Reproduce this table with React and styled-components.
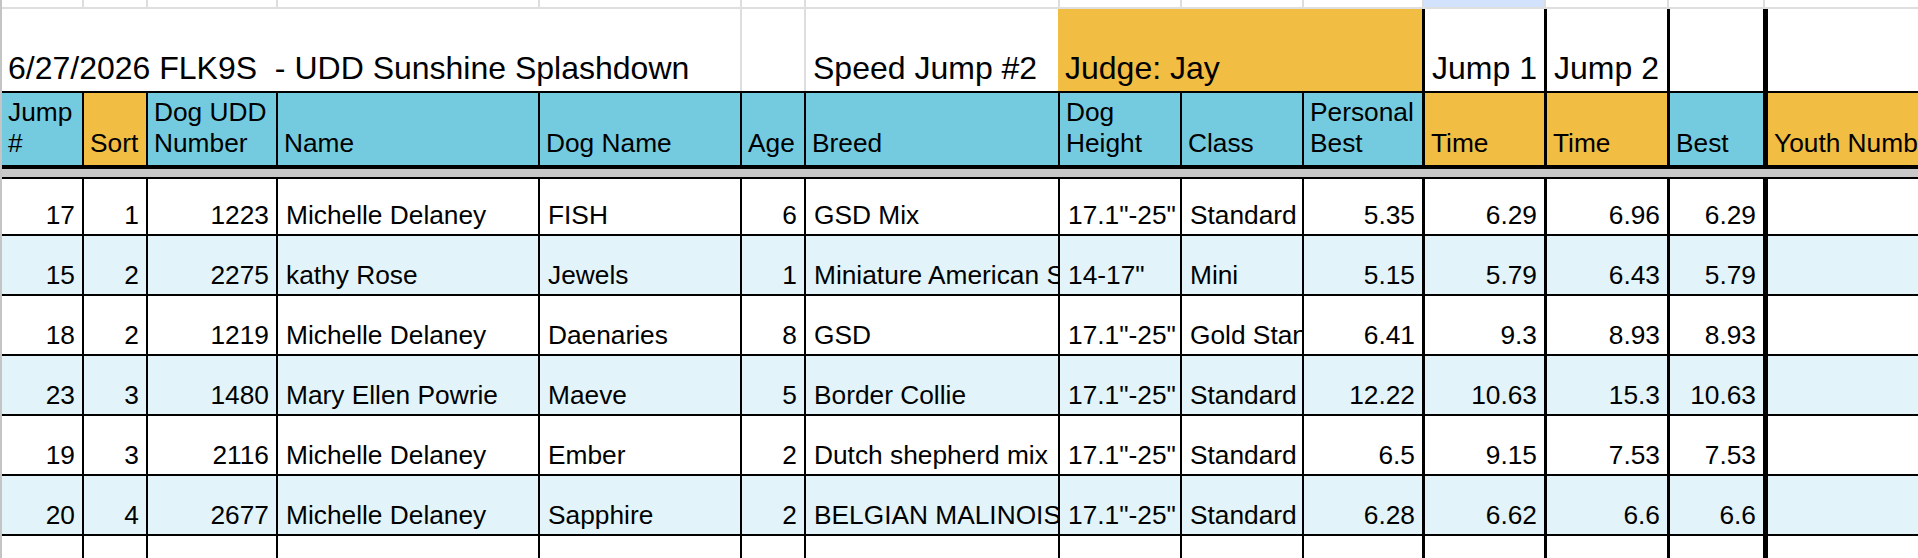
import styled, { createGlobalStyle } from "styled-components";

const CYAN = "#74cbdf";
const ORANGE = "#f1bd42";
const STRIPE = "#e2f4f9";
const GRID = "#dedede";

const COLUMNS = [
  { key: "jump", width: 80, border: 0, align: "right", head: ["Jump", "#"], tone: CYAN },
  { key: "sort", width: 64, border: 2, align: "right", head: ["Sort"], tone: ORANGE },
  { key: "udd", width: 130, border: 2, align: "right", head: ["Dog UDD", "Number"], tone: CYAN },
  { key: "name", width: 262, border: 2, align: "left", head: ["Name"], tone: CYAN },
  { key: "dog", width: 202, border: 2, align: "left", head: ["Dog Name"], tone: CYAN },
  { key: "age", width: 64, border: 2, align: "right", head: ["Age"], tone: CYAN },
  { key: "breed", width: 254, border: 2, align: "left", head: ["Breed"], tone: CYAN },
  { key: "height", width: 122, border: 2, align: "left", head: ["Dog", "Height"], tone: CYAN },
  { key: "class", width: 122, border: 2, align: "left", head: ["Class"], tone: CYAN },
  { key: "pb", width: 120, border: 2, align: "right", head: ["Personal", "Best"], tone: CYAN },
  { key: "t1", width: 122, border: 3, align: "right", head: ["Time"], tone: ORANGE },
  { key: "t2", width: 123, border: 3, align: "right", head: ["Time"], tone: ORANGE },
  { key: "best", width: 96, border: 3, align: "right", head: ["Best"], tone: CYAN },
  { key: "youth", width: 300, border: 5, align: "left", head: ["Youth Number"], tone: ORANGE },
];

const ROWS = [
  [17, 1, 1223, "Michelle Delaney", "FISH", 6, "GSD Mix", '17.1"-25"', "Standard", "5.35", "6.29", "6.96", "6.29", ""],
  [15, 2, 2275, "kathy Rose", "Jewels", 1, "Miniature American Shepherd", '14-17"', "Mini", "5.15", "5.79", "6.43", "5.79", ""],
  [18, 2, 1219, "Michelle Delaney", "Daenaries", 8, "GSD", '17.1"-25"', "Gold Standard", "6.41", "9.3", "8.93", "8.93", ""],
  [23, 3, 1480, "Mary Ellen Powrie", "Maeve", 5, "Border Collie", '17.1"-25"', "Standard", "12.22", "10.63", "15.3", "10.63", ""],
  [19, 3, 2116, "Michelle Delaney", "Ember", 2, "Dutch shepherd mix", '17.1"-25"', "Standard", "6.5", "9.15", "7.53", "7.53", ""],
  [20, 4, 2677, "Michelle Delaney", "Sapphire", 2, "BELGIAN MALINOIS", '17.1"-25"', "Standard", "6.28", "6.62", "6.6", "6.6", ""],
];

const GlobalStyle = createGlobalStyle`
  html, body {
    margin: 0;
    padding: 0;
    background: #fff;
    overflow: hidden;
  }
  body {
    font-family: "Liberation Sans", Arial, sans-serif;
    color: #000;
  }
`;

const Sheet = styled.div`
  width: 1916px;
  height: 558px;
  border-left: 2px solid #c4c4c4;
  overflow: hidden;
  display: flex;
  flex-direction: column;
`;

const Row = styled.div`
  display: grid;
  grid-template-columns: ${COLUMNS.map((c) => c.width + "px").join(" ")};
  flex-shrink: 0;
  height: ${(p) => p.$height}px;
  box-sizing: border-box;
  background: ${(p) => p.$bg || "#fff"};
  border-top: ${(p) => (p.$top ? `${p.$top}px solid #000` : "none")};
  border-bottom: ${(p) => (p.$bottom ? `${p.$bottom} solid ${p.$bottomColor || "#000"}` : "none")};
`;

const GridCell = styled.div`
  box-sizing: border-box;
  border-left: ${(p) => (p.$line ? `2px solid ${GRID}` : "none")};
  background: ${(p) => p.$bg || "transparent"};
`;

const TitleCell = styled.div`
  box-sizing: border-box;
  grid-column: ${(p) => p.$span || "auto"};
  border-left: ${(p) => (p.$border ? `${p.$border}px solid ${p.$color || "#000"}` : "none")};
  background: ${(p) => p.$bg || "transparent"};
  display: flex;
  align-items: flex-end;
  padding: 0 6px 4px ${(p) => p.$pad || 7}px;
  font-size: 32px;
  line-height: 37px;
  white-space: pre;
  position: relative;
  z-index: ${(p) => (p.$over ? 1 : 0)};
`;

const HeadCell = styled.div`
  box-sizing: border-box;
  border-left: ${(p) => (p.$border ? `${p.$border}px solid #000` : "none")};
  background: ${(p) => p.$bg};
  display: flex;
  flex-direction: column;
  justify-content: flex-end;
  padding: 0 4px 6px 6px;
  font-size: 26.3px;
  line-height: 31px;
  white-space: nowrap;
  overflow: hidden;
`;

const Divider = styled.div`
  flex-shrink: 0;
  height: 8px;
  background: #c8c8c8;
  border-bottom: 2px solid #000;
`;

const DataCell = styled.div`
  box-sizing: border-box;
  border-left: ${(p) => (p.$border ? `${p.$border}px solid #000` : "none")};
  display: flex;
  align-items: flex-end;
  justify-content: ${(p) => (p.$align === "right" ? "flex-end" : "flex-start")};
  padding: 0 7px 4px 8px;
  font-size: 26.3px;
  line-height: 30px;
  white-space: nowrap;
  overflow: hidden;
`;

function TopStrip() {
  return (
    <Row $height={9} $bottom="2px" $bottomColor={GRID}>
      {COLUMNS.map((c, i) => (
        <GridCell key={c.key} $line={i > 0} $bg={c.key === "t1" ? "#d3e3fd" : null} />
      ))}
    </Row>
  );
}

function TitleRow() {
  return (
    <Row $height={82}>
      <TitleCell $span="1 / span 5" $pad={6} $over>
        6/27/2026 FLK9S  - UDD Sunshine Splashdown
      </TitleCell>
      <TitleCell $border={2} $color={GRID} />
      <TitleCell $border={2} $color={GRID}>Speed Jump #2</TitleCell>
      <TitleCell $span="span 3" $bg={ORANGE}>Judge: Jay</TitleCell>
      <TitleCell $border={3}>Jump 1</TitleCell>
      <TitleCell $border={3}>Jump 2</TitleCell>
      <TitleCell $border={3} />
      <TitleCell $border={5} />
    </Row>
  );
}

function HeaderRow() {
  return (
    <Row $height={78} $top={2} $bottom="4px">
      {COLUMNS.map((c) => (
        <HeadCell key={c.key} $border={c.border} $bg={c.tone}>
          {c.head.map((line) => (
            <span key={line}>{line}</span>
          ))}
        </HeadCell>
      ))}
    </Row>
  );
}

function DataRow({ values, index }) {
  return (
    <Row
      $height={index === 0 ? 57 : 60}
      $bottom="2px"
      $bg={index % 2 === 1 ? STRIPE : "#fff"}
    >
      {COLUMNS.map((c, i) => (
        <DataCell key={c.key} $border={c.border} $align={c.align}>
          {values[i]}
        </DataCell>
      ))}
    </Row>
  );
}

export default function App() {
  return (
    <>
      <GlobalStyle />
      <Sheet>
        <TopStrip />
        <TitleRow />
        <HeaderRow />
        <Divider />
        {ROWS.map((r, i) => (
          <DataRow key={i} values={r} index={i} />
        ))}
        <DataRow values={Array(COLUMNS.length).fill("")} index={6} />
      </Sheet>
    </>
  );
}
